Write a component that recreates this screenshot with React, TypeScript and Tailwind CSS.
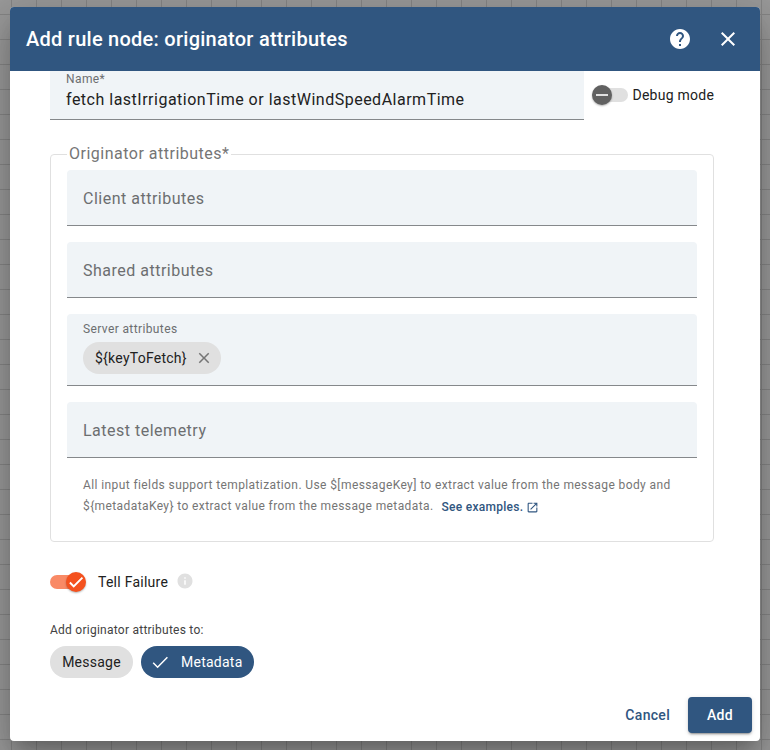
import React from "react";

type IconProps = { d: string; className: string };

function Icon({ d, className }: IconProps) {
  return (
    <svg viewBox="0 0 24 24" fill="currentColor" className={"shrink-0 " + className}>
      <path d={d} />
    </svg>
  );
}

const CLOSE =
  "M19 6.41 17.59 5 12 10.59 6.41 5 5 6.41 10.59 12 5 17.59 6.41 19 12 13.41 17.59 19 19 17.59 13.41 12z";
const HELP =
  "M12 2C6.48 2 2 6.48 2 12s4.48 10 10 10 10-4.48 10-10S17.52 2 12 2zm1 17h-2v-2h2v2zm2.07-7.75-.9.92C13.45 12.9 13 13.5 13 15h-2v-.5c0-1.1.45-2.1 1.17-2.83l1.24-1.26c.37-.36.59-.86.59-1.41 0-1.1-.9-2-2-2s-2 .9-2 2H8c0-2.21 1.79-4 4-4s4 1.79 4 4c0 .88-.36 1.68-.93 2.25z";
const INFO =
  "M12 2C6.48 2 2 6.48 2 12s4.48 10 10 10 10-4.48 10-10S17.52 2 12 2zm1 15h-2v-6h2v6zm0-8h-2V7h2v2z";
const OPEN =
  "M19 19H5V5h7V3H5c-1.11 0-2 .9-2 2v14c0 1.1.89 2 2 2h14c1.1 0 2-.9 2-2v-7h-2v7zM14 3v2h3.59l-9.83 9.83 1.41 1.41L19 6.41V10h2V3h-7z";
const CHECK = "M19.69,5.23L8.96,15.96l-4.23-4.23L2.96,13.5l6,6L21.46,7L19.69,5.23z";

function EmptyField({ label }: { label: string }) {
  return (
    <div className="flex h-14 items-center rounded-t border-b border-[#85888b] bg-[#f0f4f7] px-4 pt-0.5 text-base tracking-[0.5px] text-[#6c6e70]">
      {label}
    </div>
  );
}

export default function App() {
  return (
    <div className="h-[750px] w-[770px] overflow-hidden bg-[#999999] bg-[linear-gradient(to_right,#858585_1px,transparent_1px),linear-gradient(to_bottom,#858585_1px,transparent_1px)] bg-[size:25px_25px] bg-[position:11px_14px] px-[10px] pt-[7px] font-['Roboto',sans-serif] text-[#212121]">
      <div className="flex h-[734px] flex-col overflow-hidden rounded bg-white shadow-[0_11px_15px_-7px_rgba(0,0,0,0.2),0_24px_38px_3px_rgba(0,0,0,0.14),0_9px_46px_8px_rgba(0,0,0,0.12)]">
        <header className="flex h-16 shrink-0 items-center bg-[#305680] px-4 text-white">
          <h1 className="flex-1 text-xl font-medium tracking-[0.26px]">Add rule node: originator attributes</h1>
          <Icon d={HELP} className="mr-6 size-6" />
          <Icon d={CLOSE} className="mr-1 size-6" />
        </header>

        <main className="flex-1 px-10">
          <div className="flex">
            <div className="h-[49px] w-[534px] border-b border-[#85888b] bg-[#f0f4f7] px-4">
              <div className="text-xs leading-4 tracking-[0.4px] text-[#6c6e70]">Name*</div>
              <div className="mt-px text-base leading-6 tracking-[0.5px]">fetch lastIrrigationTime or lastWindSpeedAlarmTime</div>
            </div>
            <div className="ml-2 flex h-12 items-center">
              <div className="flex h-5 w-9 items-center">
                <div className="z-10 flex size-5 items-center justify-center rounded-full bg-[#616161] shadow-[0_1px_2px_rgba(0,0,0,0.3)]">
                  <div className="h-0.5 w-3 bg-[#e0e0e0]" />
                </div>
                <div className="-ml-3 h-3.5 w-7 rounded-r-full bg-[#e0e0e0]" />
              </div>
              <span className="ml-[4.5px] text-sm tracking-[0.25px]">Debug mode</span>
            </div>
          </div>

          <fieldset className="mt-[22px] h-[400px] w-[664px] rounded border border-[#e0e0e0] px-4">
            <legend className="px-0.5 text-base leading-6 tracking-[0.5px] text-[#757575]">Originator attributes*</legend>
            <div className="mt-1 flex flex-col gap-4">
              <EmptyField label="Client attributes" />
              <EmptyField label="Shared attributes" />
              <div className="h-[72px] rounded-t border-b border-[#85888b] bg-[#f0f4f7] px-4 pt-[7px]">
                <div className="text-xs leading-4 tracking-[0.38px] text-[#6c6e70]">Server attributes</div>
                <div className="mt-[5px] flex h-8 w-[138px] items-center rounded-full bg-[#e0e0e0] pl-3 text-sm tracking-[0.25px]">
                  <span className="flex-1">{"${keyToFetch}"}</span>
                  <Icon d={CLOSE} className="mr-2 size-[18px] text-[#757575]" />
                </div>
              </div>
              <EmptyField label="Latest telemetry" />
            </div>
            <div className="mt-[17px] px-4 text-xs leading-[21px] tracking-[0.4px] text-[#757575]">
              <div>{"All input fields support templatization. Use $[messageKey] to extract value from the message body and"}</div>
              <div className="flex">
                <span>{"${metadataKey} to extract value from the message metadata."}</span>
                <a className="ml-2 mt-px flex items-center font-medium tracking-[0.28px] text-[#305680]">
                  See examples.
                  <Icon d={OPEN} className="ml-[3px] size-[13px]" />
                </a>
              </div>
            </div>
          </fieldset>

          <div className="mt-[30px] flex h-5 items-center">
            <div className="flex h-5 w-9 items-center">
              <div className="h-3.5 w-7 rounded-l-full bg-[#f98a66]" />
              <div className="-ml-3 flex size-5 items-center justify-center rounded-full bg-[#f4511e] shadow-[0_1px_2px_rgba(0,0,0,0.3)]">
                <Icon d={CHECK} className="size-[18px] text-white" />
              </div>
            </div>
            <span className="ml-3 text-sm tracking-[0.25px]">Tell Failure</span>
            <Icon d={INFO} className="mb-0.5 ml-2 size-[18px] text-[#e0e0e0]" />
          </div>

          <div className="mt-[30px] text-xs leading-4 tracking-[0.25px] text-[#424242]">Add originator attributes to:</div>
          <div className="mt-2 flex gap-2 text-sm tracking-[0.25px]">
            <div className="flex h-8 w-[83px] items-center justify-center rounded-full bg-[#e0e0e0]">Message</div>
            <div className="flex h-8 w-[113px] items-center rounded-full bg-[#305680] pl-2.5 text-white">
              <svg viewBox="0 0 18 18" className="size-[18px] fill-none stroke-current stroke-[1.5]">
                <path d="M2.2 9.8 6.6 14.2 16.4 4.2" />
              </svg>
              <span className="ml-3">Metadata</span>
            </div>
          </div>
        </main>

        <footer className="flex h-11 shrink-0 items-start justify-end pr-2 text-sm font-medium tracking-[0.3px]">
          <button className="h-9 px-4 text-[#305680]">Cancel</button>
          <button className="ml-0.5 h-9 w-16 rounded bg-[#305680] text-white shadow-[0_3px_1px_-2px_rgba(0,0,0,0.2),0_2px_2px_0_rgba(0,0,0,0.14),0_1px_5px_0_rgba(0,0,0,0.12)]">
            Add
          </button>
        </footer>
      </div>
    </div>
  );
}
